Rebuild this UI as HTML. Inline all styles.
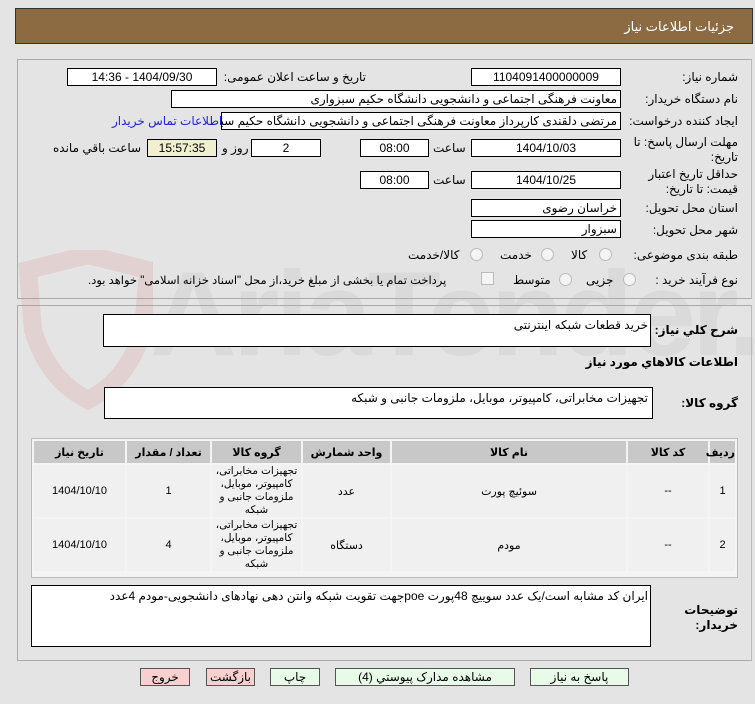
<!DOCTYPE html>
<html><head><meta charset="utf-8"><style>
body{margin:0;width:755px;height:704px;background:#e4e4e4;font-family:"Liberation Sans","DejaVu Sans",sans-serif;font-size:12px;position:relative;overflow:hidden;color:#000}
.a{position:absolute}
.hdr{left:15px;top:8px;width:736px;height:34px;background:#8c6b43;border:1px solid #333}
.hdr span{position:absolute;right:18px;top:10px;color:#fff;font-size:13px}
.pan{border:1px solid #aaa;border-right-color:#bbb;left:17px;width:733px}
.box{background:#fff;border:1px solid #000;box-sizing:border-box;height:18px;line-height:16px;direction:rtl;white-space:nowrap;overflow:hidden;padding:0 3px}
.c{text-align:center}
.lb{direction:rtl;white-space:nowrap}
.r{text-align:right}
.rad{width:11px;height:11px;border-radius:50%;border:1px solid #bbb;background:#f4f4f4}
table{border-collapse:separate;border-spacing:2px;font-size:11px;direction:rtl;table-layout:fixed}
th{background:#c8c8c8;height:22px;font-weight:bold;padding:0}
td{background:#f0f0f0;text-align:center;height:52px;padding:0;overflow:hidden}
td div.gc{height:52px;overflow:hidden;font-size:10.5px;line-height:13px;display:flex;align-items:center;justify-content:center}
.btn{height:18px;box-sizing:border-box;border:1px solid #555;text-align:center;line-height:16px;direction:rtl}
.g{background:#e8fae8}.p{background:#f8d0d0}
.wm{color:rgba(170,170,170,0.18);font-size:120px;font-weight:bold;left:150px;top:245px;letter-spacing:-4px}
</style></head><body>
<div class="a hdr"><span>جزئیات اطلاعات نیاز</span></div>
<div class="a pan" style="top:59px;height:238px"></div>
<div class="a pan" style="top:305px;height:354px"></div>
<svg class="a" style="left:18px;top:250px" width="135" height="160"><path d="M10 20 L70 5 L130 20 L125 80 Q110 130 70 150 Q30 130 15 80 Z" fill="none" stroke="rgba(215,120,120,0.18)" stroke-width="18"/></svg>
<div class="a wm">AriaTender.net</div>

<div class="a lb" style="right:17px;top:70px">شماره نیاز:</div>
<div class="a box c" style="left:471px;top:68px;width:150px">1104091400000009</div>
<div class="a lb" style="right:389px;top:70px">تاریخ و ساعت اعلان عمومی:</div>
<div class="a box c" style="left:67px;top:68px;width:150px">1404/09/30 - 14:36</div>

<div class="a lb" style="right:17px;top:92px">نام دستگاه خریدار:</div>
<div class="a box" style="left:171px;top:90px;width:450px">معاونت فرهنگی اجتماعی و دانشجویی دانشگاه حکیم سبزواری</div>

<div class="a lb" style="right:17px;top:114px">ایجاد کننده درخواست:</div>
<div class="a box" style="left:221px;top:112px;width:400px">مرتضی دلقندی کارپرداز معاونت فرهنگی اجتماعی و دانشجویی دانشگاه حکیم سبزواری</div>
<div class="a lb" style="left:112px;top:114px;color:#2020e0">اطلاعات تماس خریدار</div>

<div class="a lb r" style="right:17px;top:135px;line-height:15px">مهلت ارسال پاسخ: تا<br>تاریخ:</div>
<div class="a box c" style="left:471px;top:139px;width:150px">1404/10/03</div>
<div class="a lb" style="left:433px;top:141px">ساعت</div>
<div class="a box c" style="left:360px;top:139px;width:69px">08:00</div>
<div class="a box c" style="left:251px;top:139px;width:70px">2</div>
<div class="a lb" style="left:222px;top:141px">روز و</div>
<div class="a box c" style="left:147px;top:139px;width:70px;background:#f0f0d0">15:57:35</div>
<div class="a lb" style="left:53px;top:141px">ساعت باقي مانده</div>

<div class="a lb r" style="right:17px;top:167px;line-height:15px">حداقل تاریخ اعتبار<br>قیمت: تا تاریخ:</div>
<div class="a box c" style="left:471px;top:171px;width:150px">1404/10/25</div>
<div class="a lb" style="left:433px;top:173px">ساعت</div>
<div class="a box c" style="left:360px;top:171px;width:69px">08:00</div>

<div class="a lb" style="right:17px;top:201px">استان محل تحویل:</div>
<div class="a box" style="left:471px;top:199px;width:150px">خراسان رضوی</div>
<div class="a lb" style="right:17px;top:223px">شهر محل تحویل:</div>
<div class="a box" style="left:471px;top:220px;width:150px">سبزوار</div>

<div class="a lb" style="right:17px;top:248px">طبقه بندی موضوعی:</div>
<div class="a rad" style="left:599px;top:248px"></div><div class="a lb" style="left:571px;top:248px">کالا</div>
<div class="a rad" style="left:541px;top:248px"></div><div class="a lb" style="left:500px;top:248px">خدمت</div>
<div class="a rad" style="left:470px;top:248px"></div><div class="a lb" style="left:408px;top:248px">کالا/خدمت</div>

<div class="a lb" style="right:17px;top:273px">نوع فرآیند خرید :</div>
<div class="a rad" style="left:623px;top:273px"></div><div class="a lb" style="left:586px;top:273px">جزیی</div>
<div class="a rad" style="left:559px;top:273px"></div><div class="a lb" style="left:513px;top:273px">متوسط</div>
<div class="a" style="left:481px;top:272px;width:11px;height:11px;border:1px solid #bbb;background:#f4f4f4"></div>
<div class="a lb" style="left:88px;top:273px;font-size:11.5px">پرداخت تمام یا بخشی از مبلغ خرید،از محل "اسناد خزانه اسلامی" خواهد بود.</div>

<div class="a lb" style="right:17px;top:323px;font-weight:bold">شرح کلي نیاز:</div>
<div class="a" style="left:103px;top:314px;width:548px;height:33px;background:#fff;border:1px solid #000;box-sizing:border-box;direction:rtl;padding:3px 2px">خرید قطعات شبکه اینترنتی</div>
<div class="a lb" style="right:17px;top:355px;font-weight:bold">اطلاعات کالاهاي مورد نیاز</div>
<div class="a lb" style="right:17px;top:396px;font-weight:bold">گروه کالا:</div>
<div class="a" style="left:104px;top:387px;width:549px;height:32px;background:#fff;border:1px solid #000;box-sizing:border-box;direction:rtl;padding:3px 4px">تجهیزات مخابراتی، کامپیوتر، موبایل، ملزومات جانبی و شبکه</div>

<div class="a" style="left:31px;top:438px;width:707px;height:140px;border:1px solid #bbb;box-sizing:border-box;background:#f4f4f4;overflow:hidden">
<table style="width:705px;margin:0">
<colgroup><col style="width:25px"><col style="width:80px"><col style="width:234px"><col style="width:87px"><col style="width:89px"><col style="width:83px"><col></colgroup>
<tr><th>ردیف</th><th>کد کالا</th><th>نام کالا</th><th>واحد شمارش</th><th>گروه کالا</th><th>تعداد / مقدار</th><th>تاریخ نیاز</th></tr>
<tr><td>1</td><td>--</td><td>سوئیچ پورت</td><td>عدد</td><td><div class="gc">تجهیزات مخابراتی، کامپیوتر، موبایل، ملزومات جانبی و شبکه</div></td><td>1</td><td>1404/10/10</td></tr>
<tr><td>2</td><td>--</td><td>مودم</td><td>دستگاه</td><td><div class="gc">تجهیزات مخابراتی، کامپیوتر، موبایل، ملزومات جانبی و شبکه</div></td><td>4</td><td>1404/10/10</td></tr>
</table></div>

<div class="a lb r" style="right:17px;top:603px;font-weight:bold;line-height:15px">توضیحات<br>خریدار:</div>
<div class="a" style="left:31px;top:585px;width:620px;height:62px;background:#fff;border:1px solid #000;box-sizing:border-box;direction:rtl;padding:3px 2px">ایران کد مشابه است/یک عدد سوییچ 48پورت poeجهت تقویت شبکه  وانتن دهی نهادهای دانشجویی-مودم  4عدد</div>

<div class="a btn p" style="left:140px;top:668px;width:50px">خروج</div>
<div class="a btn p" style="left:206px;top:668px;width:49px">بازگشت</div>
<div class="a btn g" style="left:270px;top:668px;width:50px">چاپ</div>
<div class="a btn g" style="left:335px;top:668px;width:180px">مشاهده مدارک پیوستي (4)</div>
<div class="a btn g" style="left:530px;top:668px;width:99px">پاسخ به نیاز</div>
</body></html>
